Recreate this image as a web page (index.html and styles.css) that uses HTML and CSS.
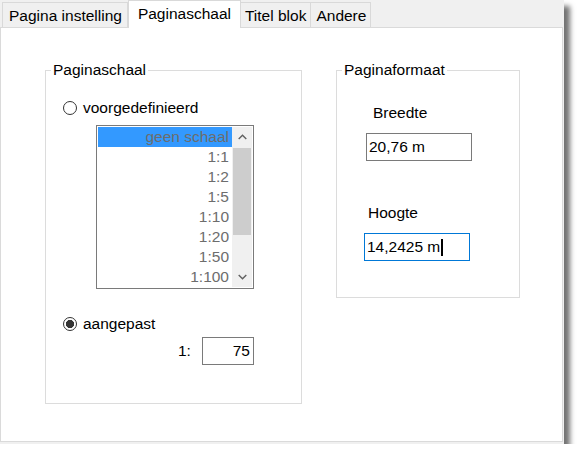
FILE: index.html
```html
<!DOCTYPE html>
<html lang="nl">
<head>
<meta charset="utf-8">
<title>Pagina-instellingen</title>
<link rel="stylesheet" href="styles.css">
</head>
<body>
<div class="window">
  <div class="tabs">
    <div class="tab">Pagina instelling</div>
    <div class="tab active">Paginaschaal</div>
    <div class="tab">Titel blok</div>
    <div class="tab">Andere</div>
  </div>
  <div class="panel">
    <fieldset class="group scale-group">
      <legend>Paginaschaal</legend>
      <div class="radio-row row-predefined"><span class="radio"></span><span>voorgedefinieerd</span></div>
      <div class="listbox">
        <ul class="items">
          <li class="selected">geen schaal</li>
          <li>1:1</li>
          <li>1:2</li>
          <li>1:5</li>
          <li>1:10</li>
          <li>1:20</li>
          <li>1:50</li>
          <li>1:100</li>
        </ul>
        <div class="scrollbar">
          <div class="arrow"><svg width="9" height="6" viewBox="0 0 9 6"><polyline points="0.7,5 4.5,1.2 8.3,5" fill="none" stroke="#606060" stroke-width="1.4"/></svg></div>
          <div class="thumb"></div>
          <div class="track"></div>
          <div class="arrow"><svg width="9" height="6" viewBox="0 0 9 6"><polyline points="0.7,1 4.5,4.8 8.3,1" fill="none" stroke="#606060" stroke-width="1.4"/></svg></div>
        </div>
      </div>
      <div class="radio-row row-custom"><span class="radio checked"></span><span>aangepast</span></div>
      <div class="ratio-row"><span>1:</span><div class="field field-ratio">75</div></div>
    </fieldset>
    <fieldset class="group format-group">
      <legend>Paginaformaat</legend>
      <div class="label label-w">Breedte</div>
      <div class="field field-w">20,76 m</div>
      <div class="label label-h">Hoogte</div>
      <div class="field field-h">14,2425 m<span class="caret"></span></div>
    </fieldset>
  </div>
</div>
</body>
</html>
```

FILE: styles.css
```css
body {
  margin: 0;
  background: #fff;
  font-family: "Liberation Sans", Arial, sans-serif;
  font-size: 15.5px;
  color: #000;
}

.window {
  width: 564px;
  height: 444px;
  box-sizing: border-box;
  background: #f0f0f0;
  padding: 0 1px 2px 0;
  box-shadow: 6px 6px 5px rgba(0, 0, 0, 0.55);
  display: flex;
  flex-direction: column;
}

.tabs {
  display: flex;
  align-items: flex-start;
  height: 27px;
  padding-left: 2px;
  flex: none;
}

.tab {
  box-sizing: border-box;
  height: 25px;
  margin-top: 2px;
  padding: 3px 4px 0;
  line-height: 20px;
  border: 1px solid #d9d9d9;
  border-bottom: none;
  background: #f0f0f0;
  white-space: nowrap;
}

.tab:first-child {
  padding: 3px 5px 0 6px;
}

.tab.active {
  height: 28px;
  margin-top: 0;
  padding: 3px 9px 0;
  background: #fff;
  position: relative;
  z-index: 1;
}

.tab.active ~ .tab {
  margin-left: -1px;
}

.tab.active ~ .tab:last-child {
  padding-left: 5px;
}

.panel {
  flex: 1;
  background: #fff;
  border: 1px solid #dadada;
  display: flex;
  align-items: flex-start;
  gap: 34px;
  padding: 33px 0 0 44px;
}

.group {
  margin: 0;
  padding: 0;
  border: 1px solid #dcdcdc;
  min-width: 0;
  box-sizing: border-box;
}

.group legend {
  margin-left: 5px;
  padding: 0 2px;
  line-height: 18px;
}

.scale-group {
  width: 257px;
  padding-bottom: 38px;
}

.format-group {
  width: 184px;
  padding-bottom: 36px;
}

.radio-row {
  display: flex;
  align-items: center;
  gap: 6px;
  height: 20px;
  line-height: 20px;
  margin-left: 17px;
}

.radio {
  width: 14px;
  height: 14px;
  box-sizing: border-box;
  border: 1px solid #333;
  border-radius: 50%;
  background: #fff;
  flex: none;
}

.radio.checked {
  background: radial-gradient(circle at center, #333 0 3.8px, #fff 4.4px);
}

.row-predefined {
  margin-top: 19px;
}

.row-custom {
  margin-top: 25px;
}

.listbox {
  margin: 7px 0 0 50px;
  width: 158px;
  height: 164px;
  box-sizing: border-box;
  border: 1px solid #7a7a7a;
  padding: 1px;
  display: flex;
}

.items {
  flex: 1;
  list-style: none;
  margin: 0;
  padding: 0;
  color: #6d6d6d;
}

.items li {
  height: 20px;
  line-height: 20px;
  text-align: right;
  padding-right: 3px;
}

.items li.selected {
  background: #3399ff;
}

.scrollbar {
  width: 20px;
  background: #f0f0f0;
  display: flex;
  flex-direction: column;
}

.arrow {
  height: 20px;
  display: flex;
  align-items: center;
  justify-content: center;
  flex: none;
}

.thumb {
  height: 87px;
  margin: 1px 1px 0;
  background: #cdcdcd;
  flex: none;
}

.track {
  flex: 1;
}

.ratio-row {
  display: flex;
  align-items: center;
  gap: 11px;
  margin: 3px 0 0 132px;
}

.field {
  box-sizing: border-box;
  height: 28px;
  border: 1px solid #7a7a7a;
  line-height: 26px;
  padding: 0 2px;
  background: #fff;
  white-space: nowrap;
}

.field-ratio {
  width: 52px;
  text-align: right;
  padding-right: 3px;
}

.label {
  line-height: 18px;
}

.label-w {
  margin: 25px 0 0 36px;
}

.field-w {
  width: 106px;
  margin: 11px 0 0 29px;
}

.label-h {
  margin: 43px 0 0 31px;
}

.field-h {
  width: 106px;
  margin: 11px 0 0 27px;
  border-color: #0078d7;
}

.caret {
  display: inline-block;
  width: 2px;
  height: 17px;
  background: #000;
  vertical-align: middle;
  margin-left: 1px;
}
```
